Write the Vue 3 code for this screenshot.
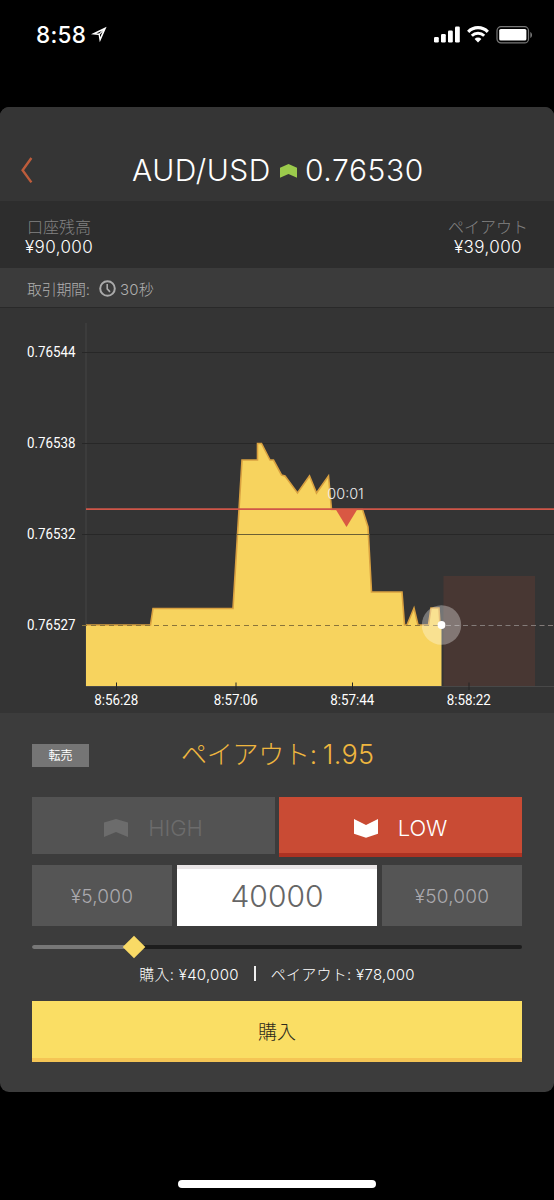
<script setup>
const priceTicks = [
  { y: 352, label: '0.76544' },
  { y: 443, label: '0.76538' },
  { y: 534, label: '0.76532' },
  { y: 625, label: '0.76527' },
]
const timeTicks = [
  { x: 116.5, label: '8:56:28' },
  { x: 236, label: '8:57:06' },
  { x: 352.5, label: '8:57:44' },
  { x: 469, label: '8:58:22' },
]
const line =
  '86,625 150.5,625 153,608.5 233,608.5 242,460 257.5,460 257.5,443.5 261.5,443.5 270,460 273.5,460 281.5,475 285,476 297.5,493 309.5,476 316.5,493 328.5,476 331.5,509.5 362.5,509.5 368,527 371.5,592 402,592 404.5,625 407,625 414,608 418,625 428.5,625 431,608 439,608 440,625'
const area = `86,686 ${line} 441.5,625 441.5,686`
</script>

<template>
  <div class="screen">
    <div class="status">
      <div class="clock">
        <span>8:58</span>
        <svg width="17" height="17" viewBox="0 0 17 17">
          <path fill-rule="evenodd" d="M0 8.2 15.6 0.8 8.8 16.2 7.6 9Z M5.2 7.6 8.8 7.6 9.2 11.2 12.2 4.3Z" fill="#fff" />
          <path d="M8 8.6 13 3.5" stroke="#fff" stroke-width="1.1" />
        </svg>
      </div>
      <div class="indicators">
        <svg width="26" height="17" viewBox="0 0 26 17" fill="#fff">
          <rect x="0" y="11" width="4.8" height="5.5" rx="1.2" />
          <rect x="7" y="8" width="4.8" height="8.5" rx="1.2" />
          <rect x="14" y="4.5" width="4.8" height="12" rx="1.2" />
          <rect x="21" y="0.5" width="4.8" height="16" rx="1.2" />
        </svg>
        <svg width="22" height="17" viewBox="0 0 22 17">
          <path d="M1.2 5.8a13.8 13.8 0 0 1 19.6 0" fill="none" stroke="#fff" stroke-width="3.2" />
          <path d="M4.8 9.8a8.7 8.7 0 0 1 12.4 0" fill="none" stroke="#fff" stroke-width="2.9" />
          <path d="M7.6 13a4.8 4.8 0 0 1 6.8 0L11 16.5Z" fill="#fff" />
        </svg>
        <svg width="37" height="18" viewBox="0 0 37 18">
          <rect x="1" y="0.7" width="31.5" height="16.2" rx="4" fill="none" stroke="#777" stroke-width="1.2" />
          <rect x="3.2" y="3" width="27.2" height="11.6" rx="1.6" fill="#fff" />
          <path d="M34.3 6v6c2.3-1 2.3-5 0-6Z" fill="#777" />
        </svg>
      </div>
    </div>

    <main class="panel">
      <header class="title">
        <svg class="back" width="14" height="28" viewBox="0 0 14 28">
          <path d="M11.4 2 2.6 14.3 11.4 26.4" fill="none" stroke="#bd5c3b" stroke-width="2.4" />
        </svg>
        <span class="pair">AUD/USD</span>
        <svg class="up" width="17" height="14" viewBox="0 0 17 14">
          <path d="M0 3.8 8.5 0 17 3.8V13.8L8.5 10 0 13.8Z" fill="#9bca4c" />
        </svg>
        <span class="rate">0.76530</span>
      </header>

      <section class="balances">
        <div class="balance">
          <span class="caption">口座残高</span>
          <span class="amount">¥90,000</span>
        </div>
        <div class="balance">
          <span class="caption">ペイアウト</span>
          <span class="amount">¥39,000</span>
        </div>
      </section>

      <section class="period">
        <span class="period-name">取引期間:</span>
        <svg width="17" height="17" viewBox="0 0 17 17" fill="none" stroke="#aaa">
          <circle cx="8.5" cy="8.5" r="7.3" stroke-width="2" />
          <path d="M8.2 4v4.9l2.8 3" stroke-width="1.6" />
        </svg>
        <span class="seconds">30秒</span>
      </section>

      <svg class="chart" width="554" height="406" viewBox="0 307 554 406">
        <path d="M0 307.5H554" stroke="#292929" />
        <path d="M86 323V686" stroke="#444" />
        <path d="M86 686.5H554" stroke="#484848" />
        <path v-for="t in priceTicks.slice(0, 3)" :key="t.y" :d="`M82 ${t.y + 0.5}H554`" stroke="#272727" />
        <polygon :points="area" fill="#f7d35e" />
        <polyline :points="line" fill="none" stroke="#d9a140" stroke-width="1.6" />
        <path d="M236 534.5H370" stroke="#6b5f35" stroke-width="1.2" />
        <path d="M82 625.5H441" stroke="#8a743a" stroke-dasharray="5 4" />
        <rect x="443.5" y="576" width="91.5" height="110" fill="#483733" />
        <path d="M446 625.5H554" stroke="#837b79" stroke-dasharray="5 3.5" />
        <path v-for="t in timeTicks" :key="t.x" :d="`M${t.x} 682.5V690`" stroke="#252525" />
        <path d="M86 509.2H554" stroke="#cf5648" stroke-width="1.7" />
        <path d="M335.5 509H357.5L346.5 527Z" fill="#d95843" />
        <circle cx="441.5" cy="625" r="19.7" fill="#fff" fill-opacity=".32" />
        <circle cx="441.5" cy="625" r="3.9" fill="#fff" />
        <text x="327.3" y="498.7" class="countdown" textLength="36.5" lengthAdjust="spacingAndGlyphs">00:01</text>
        <g class="axis">
          <text v-for="t in priceTicks" :key="t.label" x="27" :y="t.y + 5" textLength="48.5" lengthAdjust="spacingAndGlyphs">{{ t.label }}</text>
          <text v-for="t in timeTicks" :key="t.label" :x="t.x - 22.3" y="705" textLength="44" lengthAdjust="spacingAndGlyphs">{{ t.label }}</text>
        </g>
      </svg>

      <section class="trade">
        <div class="payout-row">
          <button class="resell">転売</button>
          <span class="payout">ペイアウト:<span class="ratio">1.95</span></span>
        </div>
        <div class="directions">
          <button class="high">
            <svg width="24" height="18" viewBox="0 0 24 18"><path d="M0 3.6 12 0 24 3.6V18L12 13 0 18Z" fill="#6c6c6c" /></svg>
            <span>HIGH</span>
          </button>
          <button class="low">
            <svg width="24" height="19" viewBox="0 0 24 19"><path d="M0 0 12 6 24 0V14.8L12 18.7 0 14.8Z" fill="#fff" /></svg>
            <span>LOW</span>
          </button>
        </div>
        <div class="amounts">
          <button class="preset">¥5,000</button>
          <div class="entry">40000</div>
          <button class="preset">¥50,000</button>
        </div>
        <div class="slider"><div class="filled"></div><div class="knob"></div></div>
        <div class="summary">
          <span>購入: ¥40,000</span>
          <i class="bar"></i>
          <span>ペイアウト: ¥78,000</span>
        </div>
        <button class="buy">購入</button>
      </section>
    </main>
    <div class="home"></div>
  </div>
</template>

<style>
body { margin: 0; background: #000; }
</style>

<style scoped>
.screen {
  width: 554px;
  height: 1200px;
  background: #000;
  color: #fff;
  font-family: Inter, "Noto Sans CJK JP", sans-serif;
  font-weight: 300;
  display: flex;
  flex-direction: column;
  align-items: center;
  overflow: hidden;
  white-space: nowrap;
}
svg { display: block; flex: none; }
button {
  border: 0;
  padding: 0;
  font: inherit;
  color: inherit;
  display: flex;
  align-items: center;
  justify-content: center;
  box-sizing: border-box;
}
.status {
  width: 554px;
  height: 107px;
  flex: none;
  box-sizing: border-box;
  padding: 21px 21px 0 36px;
  display: flex;
  justify-content: space-between;
  align-items: flex-start;
}
.clock { display: flex; align-items: center; gap: 5px; height: 27px; font-size: 22.5px; font-weight: 500; letter-spacing: 0.3px; }
.indicators { display: flex; gap: 7px; height: 27px; align-items: center; }
.panel { width: 554px; height: 985px; flex: none; border-radius: 9px; overflow: hidden; background: #3c3c3c; }
.title {
  height: 94px;
  background: #353535;
  display: flex;
  align-items: center;
  box-sizing: border-box;
  padding: 32px 0 0 20px;
  font-size: 30px;
  line-height: 36px;
}
.pair { width: 138px; margin-left: 98px; letter-spacing: 0.55px; }
.up { margin: 2px 8px 0 10px; }
.rate { letter-spacing: 0.6px; }
.balances {
  height: 67px;
  background: #2d2d2d;
  display: flex;
  justify-content: space-between;
  padding: 16px 26px 0 25px;
  box-sizing: border-box;
}
.balance { display: flex; flex-direction: column; align-items: center; }
.caption { font-size: 16px; line-height: 20px; color: #828282; }
.amount { font-size: 17px; line-height: 20px; letter-spacing: 0.4px; }
.period {
  height: 39px;
  background: #3b3b3b;
  display: flex;
  align-items: center;
  padding: 1px 0 0 27px;
  box-sizing: border-box;
  font-size: 15px;
  color: #b0b0b0;
}
.period-name { width: 72px; letter-spacing: -0.3px; }
.seconds { margin-left: 4px; letter-spacing: 0.2px; }
.chart { background: #343434; }
.axis { fill: #fff; font: 400 14px Roboto, sans-serif; }
.countdown { fill: #eee; font: 300 14px Inter, sans-serif; }
.trade { padding: 22px 32px 0; }
.payout-row { height: 40px; display: flex; align-items: center; }
.resell { width: 57px; height: 23px; background: #757575; font-size: 12px; font-weight: 400; padding-bottom: 1px; }
.payout { margin-left: 92px; margin-top: -5px; font-size: 26px; letter-spacing: -0.25px; color: #efb63f; }
.ratio { font-size: 27px; margin-left: 6px; letter-spacing: 0.3px; }
.directions { margin-top: 22px; display: flex; gap: 4px; font-size: 22px; line-height: 28px; }
.directions button { width: 243px; height: 60px; gap: 20px; }
.directions .high { height: 57px; background: #535353; color: #6c6c6c; padding-top: 5px; }
.directions .low { background: #c94b34; border-bottom: 4px solid #ad3222; padding-top: 6px; }
.amounts { margin-top: 8px; display: flex; gap: 5px; height: 61px; }
.preset { width: 140px; background: #555; color: #aaa9ae; font-size: 19px; letter-spacing: 0.25px; padding-top: 1px; }
.entry {
  width: 200px;
  background: #fff;
  color: #666;
  border-top: 4px solid #e9e5e6;
  box-sizing: border-box;
  display: flex;
  align-items: center;
  justify-content: center;
  font-size: 30px;
  padding-bottom: 4px;
}
.slider { position: relative; height: 4px; margin-top: 19px; border-radius: 2px; background: #1d1d1d; }
.filled { width: 102px; height: 4px; border-radius: 2px; background: #777; }
.knob { position: absolute; left: 94px; top: -6px; width: 16px; height: 16px; background: #f9da66; transform: rotate(45deg); }
.summary { margin-top: 13px; height: 23px; display: flex; align-items: center; justify-content: center; font-size: 15px; letter-spacing: 0.27px; }
.bar { width: 2px; height: 15px; background: #eee; margin: 0 15px; }
.buy { width: 490px; height: 61px; margin-top: 16px; background: #fade64; border-bottom: 4px solid #f5c555; color: #2c2a1c; font-size: 19px; padding-top: 2px; }
.home { width: 198px; height: 8px; border-radius: 4px; background: #fff; margin-top: 88px; flex: none; }
</style>
